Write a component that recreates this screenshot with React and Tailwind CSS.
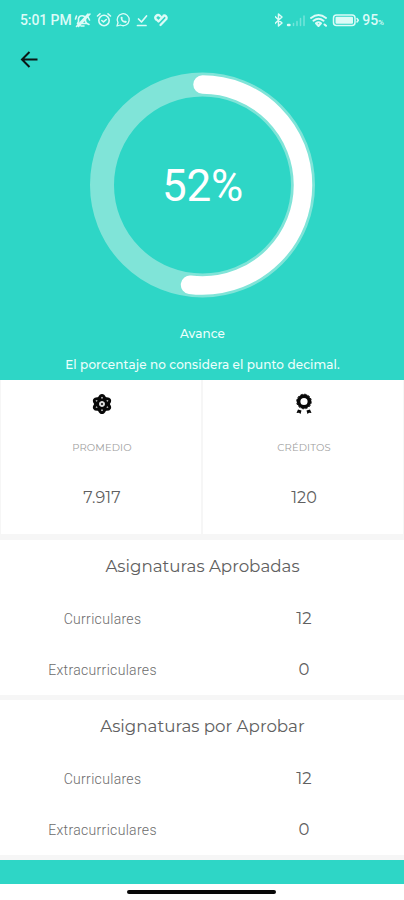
import React from 'react';

const STATS = [
  { id: 'promedio', label: 'PROMEDIO', value: '7.917', Icon: AtomIcon },
  { id: 'creditos', label: 'CRÉDITOS', value: '120', Icon: RosetteIcon },
];

const SECTIONS = [
  {
    title: 'Asignaturas Aprobadas',
    rows: [
      { label: 'Curriculares', value: 12 },
      { label: 'Extracurriculares', value: 0 },
    ],
  },
  {
    title: 'Asignaturas por Aprobar',
    rows: [
      { label: 'Curriculares', value: 12 },
      { label: 'Extracurriculares', value: 0 },
    ],
  },
];

function AtomIcon() {
  return (
    <svg width="20" height="22" viewBox="0 0 20 22" fill="none" stroke="#080808" strokeWidth="2.7">
      <circle cx="10" cy="11" r="6.5" strokeWidth="2.2" />
      <ellipse cx="10" cy="11" rx="3.9" ry="8.7" />
      <ellipse cx="10" cy="11" rx="3.9" ry="8.7" transform="rotate(60 10 11)" />
      <ellipse cx="10" cy="11" rx="3.9" ry="8.7" transform="rotate(120 10 11)" />
      <circle cx="10" cy="11" r="2.8" fill="#ddd" stroke="none" />
      <circle cx="10" cy="11" r="1" fill="#080808" stroke="none" />
      <path d="M10 4v1.500M10 16.500V18M4.200 7.500l1 .6M14.800 13.900l1 .6M4.200 14.500l1-.6M14.800 8.100l1-.6" stroke="#ddd" strokeWidth="1.4" />
    </svg>
  );
}

function RosetteIcon() {
  return (
    <svg width="18" height="22" viewBox="0 0 18 22" fill="none" stroke="#080808">
      <circle cx="9" cy="8.5" r="5.4" strokeWidth="3.6" />
      <circle cx="9" cy="8.5" r="7.3" strokeWidth="1" strokeDasharray="2.3 1.52" />
      <path d="M3 16.500l3.500 1-1 3.500-1.500-1.200-2.500.2zM15 16.500l-3.500 1 1 3.500 1.500-1.200 2.500.2z" fill="#080808" stroke="none" />
    </svg>
  );
}

function StatusBar() {
  return (
    <div className="flex h-10 items-center justify-between pl-5 pr-5 text-[#dcfbf7]">
      <div className="flex items-center">
        <span className="w-[54px] whitespace-nowrap font-['Roboto',sans-serif] text-[14px] font-medium tracking-[-0.1px]">5:01 PM</span>
        <svg width="96" height="16" viewBox="0 0 96 16" fill="none" stroke="currentColor" strokeWidth="1.6" strokeLinecap="round" strokeLinejoin="round">
          {/* muted bell */}
          <path d="M3.500 11.500H13l-1.500-2V6.500a3.600 3.600 0 0 0-7 0v3zM7 14h3M2.500 14.500L14 2M4.500 14.500L16 2M1.500 7l1-3M14 5l1.500 3M13 11.500l2 1" />
          {/* alarm */}
          <circle cx="30" cy="8.5" r="5.2" />
          <path d="M23.500 4L26 1.800M34 1.800L36.500 4M27.800 8.500l1.700 1.400 2.800-2.400" />
          {/* whatsapp */}
          <path d="M43 14l1-3.300a6 6 0 1 1 2.400 2.300z" strokeWidth="1.3" />
          <path d="M46.500 5.500q.5 5 5.500 5.500l1-1.400-2-1.200-1 .7-1.800-2 .7-1-1-1.600z" fill="currentColor" stroke="none" />
          {/* download done */}
          <path d="M64.500 7l3 3 5-6M63.500 13.500H72" strokeWidth="1.7" />
          {/* health */}
          <path d="M82 7.500a2.700 2.700 0 0 1 3.800-3.800l1 1M84.500 9.500l5-5.200M86.500 13l6-6.200a2.500 2.500 0 0 0-3-3.300M82.500 7.500l2 2" strokeWidth="2.3" />
        </svg>
      </div>
      <div className="flex items-center">
        <svg width="89" height="16" viewBox="0 0 89 16" fill="none" stroke="currentColor" strokeWidth="1.5" strokeLinecap="round" strokeLinejoin="round">
          <path d="M-1 4.500l7 6.500L2.500 14V2L6 5l-7 6.500" transform="translate(1)" />
          <path d="M13 13h1.500" strokeWidth="2.4" />
          <path d="M18.500 11.500v2M22 9.500v4M25.500 6.500v7M29 4v9.500" opacity=".4" />
          <path d="M36 6q7.500-6 15 0M38.500 8.700q5-4 10 0M41 11.300q2.500-2 5 0L43.500 14zM49.500 12.500l1.500 1.300" strokeWidth="2" />
          <rect x="58.500" y="3" width="21.5" height="10.500" rx="3" />
          <rect x="60.500" y="4.800" width="17.500" height="7" rx="1" fill="currentColor" stroke="none" />
          <path d="M82 6.500l1.300 1.700L82 10" />
        </svg>
        <span className="-ml-[2px] font-['Roboto',sans-serif] text-[14px] font-medium">95<span className="text-[8px]">%</span></span>
      </div>
    </div>
  );
}

function ProgressRing({ value }) {
  return (
    <div className="ml-[90px] grid h-[226px] w-[226px] place-items-center">
      <svg className="col-start-1 row-start-1" width="226" height="226" viewBox="0 0 226 226" fill="none">
        <circle cx="112.5" cy="113" r="100.5" stroke="#80e4d8" strokeWidth="24" />
        <circle
          cx="112.5"
          cy="113"
          r="100.5"
          stroke="#fff"
          strokeWidth="18.5"
          strokeLinecap="round"
          pathLength="100"
          strokeDasharray={`${value} 100`}
          transform="rotate(-90 112.5 113)"
        />
      </svg>
      <span className="col-start-1 row-start-1 pr-px pt-px font-['Roboto',sans-serif] text-[44px] font-[370] leading-none tracking-[-0.3px] text-white">
        {value}%
      </span>
    </div>
  );
}

function Stat({ label, value, Icon }) {
  return (
    <div className="flex h-[155px] flex-1 flex-col items-center border-x border-b border-[#f6f6f6] pl-[2px] pt-[13px]">
      <Icon />
      <span className="mt-[25px] text-[10px] leading-4 tracking-[0.1px] text-[#a0a0a0]">{label}</span>
      <span className="mt-[30px] text-[16px] leading-6 tracking-[0.1px] text-[#606060]">{value}</span>
    </div>
  );
}

function Section({ title, rows }) {
  return (
    <section className="h-40 border-b-[5px] border-[#f6f6f6] bg-white">
      <h2 className="pt-[14px] pl-px text-center text-[16.7px] leading-6 text-[#606060]">{title}</h2>
      <div className="mt-[15px]">
        {rows.map(row => (
          <div key={row.label} className="grid h-[51px] grid-cols-2 items-center pl-[2px] text-center text-[#6c6c6c]">
            <span className="pt-px font-['Roboto',sans-serif] text-[14px] font-light tracking-[0.32px]">{row.label}</span>
            <span className="pl-px text-[16.5px] text-[#606060]">{row.value}</span>
          </div>
        ))}
      </div>
    </section>
  );
}

export default function App() {
  return (
    <main className="flex h-[900px] w-[404px] flex-col overflow-hidden bg-white font-['Montserrat','Inter',sans-serif]">
      <header className="h-[380px] bg-[#2ed6c6]">
        <StatusBar />
        <div className="h-8 pl-5 pt-[10px]">
          <svg width="19" height="19" viewBox="0 0 19 19" fill="none" stroke="#0b1716" strokeWidth="2">
            <path d="M17.500 9.500H2.500M9.500 2L2 9.500 9.500 17" />
          </svg>
        </div>
        <ProgressRing value={52} />
        <p className="mt-[28px] pl-px text-center text-[12px] font-medium leading-4 tracking-[0.1px] text-[#edfffc]">Avance</p>
        <p className="mt-[15px] pl-px text-center text-[12px] font-medium leading-4 tracking-[0.1px] text-[#edfffc]">
          El porcentaje no considera el punto decimal.
        </p>
      </header>
      <div className="flex border-b-[5px] border-[#f6f6f6]">
        {STATS.map(stat => <Stat key={stat.id} {...stat} />)}
      </div>
      {SECTIONS.map(section => <Section key={section.title} {...section} />)}
      <div className="h-6 bg-[#2ed6c6]" />
      <div className="flex-1 pl-[127px] pt-[6px]">
        <div className="h-1 w-[149px] rounded-full bg-[#080808]" />
      </div>
    </main>
  );
}
